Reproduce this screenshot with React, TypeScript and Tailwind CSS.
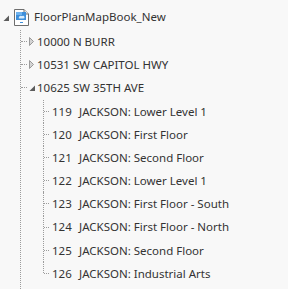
import { JSX } from "react";

const lots = [
  { name: "10000 N BURR", open: false },
  { name: "10531 SW CAPITOL HWY", open: false },
  { name: "10625 SW 35TH AVE", open: true },
];

const pages = [
  { num: "119", title: "JACKSON: Lower Level 1" },
  { num: "120", title: "JACKSON: First Floor" },
  { num: "121", title: "JACKSON: Second Floor" },
  { num: "122", title: "JACKSON: Lower Level 1" },
  { num: "123", title: "JACKSON: First Floor - South" },
  { num: "124", title: "JACKSON: First Floor - North" },
  { num: "125", title: "JACKSON: Second Floor" },
  { num: "126", title: "JACKSON: Industrial Arts" },
];

function BookIcon() {
  return (
    <svg width="15" height="17" viewBox="0 0 15 17">
      <path d="M0.5 0.5 H10 L14.5 5 V16.5 H0.5 Z" fill="#ffffff" stroke="#6e6e6e" />
      <path d="M10 0.5 V5 H14.5" fill="#e6e6e6" stroke="#6e6e6e" />
      <rect x="2" y="3" width="10" height="8" fill="#3d8fdb" />
      <rect x="2" y="3" width="6" height="3" fill="#6fb3ef" />
      <path d="M5 8 Q6 6 8 7 Q10 6 10.5 8 Q11 9.5 9 9.5 H5.5 Q4 9.5 5 8 Z" fill="#d9ecfb" />
      <rect x="6" y="13" width="3" height="1" fill="#3d8fdb" />
    </svg>
  );
}

function Expanded() {
  return (
    <svg width="7" height="7" viewBox="0 0 7 7">
      <path d="M6 0.5 V6 H0.5 Z" fill="#5c5c5c" />
    </svg>
  );
}

function Collapsed() {
  return (
    <svg width="6" height="9" viewBox="0 0 6 9">
      <path d="M0.5 0.5 L4.5 4.5 L0.5 8.5 Z" fill="#d4d4d4" stroke="#9a9a9a" />
    </svg>
  );
}

export default function App(): JSX.Element {
  return (
    <div className="w-[288px] h-[289px] overflow-hidden bg-[#f8f8f8] text-[#333333] text-[11.5px] flex flex-col pt-[4px]" style={{ fontFamily: '"Noto Sans", "Open Sans", sans-serif' }}>
      {/* root */}
      <div className="flex items-center h-[26px] shrink-0">
        <span className="w-[14px] pl-[3px] flex items-end h-[10px]"><Expanded /></span>
        <span><BookIcon /></span>
        <span className="ml-[5px]">FloorPlanMapBook_New</span>
      </div>

      <div className="ml-[20px] flex-1 border-l border-dotted border-[#9c9c9c]">
        {lots.map((lot) => (
          <div key={lot.name}>
            <div className="flex items-center h-[23.2px]">
              <span className="w-[6px] border-t border-dotted border-[#9c9c9c]"></span>
              <span className="w-[11px] pl-[2px] flex items-center">
                {lot.open ? <span className="pt-[2px]"><Expanded /></span> : <Collapsed />}
              </span>
              <span className="-ml-[1px]">{lot.name}</span>
            </div>
            {lot.open && (
              <div className="ml-[22px]">
                {pages.map((p, i) => (
                  <div key={p.num + p.title} className="flex items-center h-[23.2px]">
                    <span className={"self-start border-l border-dotted border-[#9c9c9c] " + (i === pages.length - 1 ? "h-[11.6px]" : "h-[23.2px]")}></span>
                    <span className="w-[5px] border-t border-dotted border-[#9c9c9c]"></span>
                    <span className="ml-[3px] w-[27px]">{p.num}</span>
                    <span>{p.title}</span>
                  </div>
                ))}
              </div>
            )}
          </div>
        ))}
      </div>
    </div>
  );
}
